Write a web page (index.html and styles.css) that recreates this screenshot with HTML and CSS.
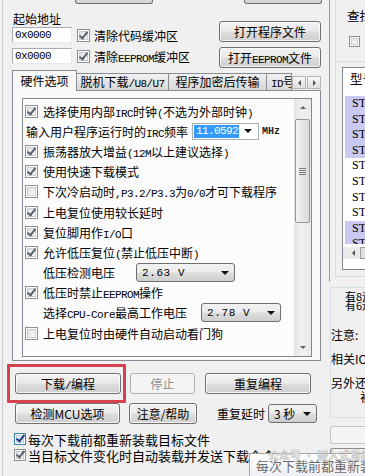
FILE: index.html
```html
<!DOCTYPE html>
<html lang="zh-CN">
<head>
<meta charset="utf-8">
<title>STC-ISP</title>
<link rel="stylesheet" href="styles.css">
</head>
<body>
<div class="screen">
  <div class="left">
    <div class="topstrip"><span class="stub s1"></span><span class="stub s2"></span></div>
    <div class="hdr">
      <div class="hdr-l">
        <div class="lbl">起始地址</div>
        <div class="addr-row"><span class="input a">0x0000</span><span class="cb on"></span><span class="cbt">清除代码缓冲区</span></div>
        <div class="addr-row r2"><span class="input a">0x0000</span><span class="cb on"></span><span class="cbt">清除<span class="a">EEPROM</span>缓冲区</span></div>
      </div>
      <div class="hdr-r">
        <div class="btn b-open">打开程序文件</div>
        <div class="btn b-open2">打开<span class="a">EEPROM</span>文件</div>
      </div>
    </div>
    <div class="tabs">
      <div class="tab sel t1">硬件选项</div>
      <div class="tab t2">脱机下载<span class="a">/U8/U7</span></div>
      <div class="tab t3">程序加密后传输</div>
      <div class="tab t4"><span class="a">ID</span>号</div>
      <div class="tabarrows"><span class="ta"><i class="tri-l"></i></span><span class="ta"><i class="tri-r"></i></span></div>
    </div>
    <div class="panel">
      <div class="opts">
        <div class="list">
          <div class="row"><span class="cb on"></span><span class="cbt">选择使用内部<span class="a">IRC</span>时钟<span class="a">(</span>不选为外部时钟<span class="a">)</span></span></div>
          <div class="row plain"><span>输入用户程序运行时的<span class="a">IRC</span>频率</span><span class="combo edit"><span class="sel-text a">11.0592</span><i class="tri"></i></span><span class="mhz">MHz</span></div>
          <div class="row"><span class="cb on"></span><span class="cbt">振荡器放大增益<span class="a">(12M</span>以上建议选择<span class="a">)</span></span></div>
          <div class="row"><span class="cb on"></span><span class="cbt">使用快速下载模式</span></div>
          <div class="row"><span class="cb"></span><span class="cbt">下次冷启动时<span class="a">,P3.2/P3.3</span>为<span class="a">0/0</span>才可下载程序</span></div>
          <div class="row"><span class="cb on"></span><span class="cbt">上电复位使用较长延时</span></div>
          <div class="row"><span class="cb on"></span><span class="cbt">复位脚用作<span class="a">I/O</span>口</span></div>
          <div class="row"><span class="cb on"></span><span class="cbt">允许低压复位<span class="a">(</span>禁止低压中断<span class="a">)</span></span></div>
          <div class="row indent"><span>低压检测电压</span><span class="combo drop c263"><span class="a">2.63 V</span><i class="tri"></i></span></div>
          <div class="row"><span class="cb on"></span><span class="cbt">低压时禁止<span class="a">EEPROM</span>操作</span></div>
          <div class="row indent"><span>选择<span class="a">CPU-Core</span>最高工作电压</span><span class="combo drop c278"><span class="a">2.78 V</span><i class="tri"></i></span></div>
          <div class="row"><span class="cb"></span><span class="cbt">上电复位时由硬件自动启动看门狗</span></div>
        </div>
        <div class="vscroll">
          <div class="arrow"><i class="tri-up"></i></div>
          <div class="track">
            <div class="thumb"><span class="grip"></span></div>
          </div>
          <div class="arrow"><i class="tri-dn"></i></div>
        </div>
      </div>
    </div>
    <div class="actions">
      <div class="act-row">
        <div class="btn b-dl">下载<span class="a">/</span>编程</div>
        <div class="btn dis b-stop">停止</div>
        <div class="btn b-rep">重复编程</div>
      </div>
      <div class="act-row r2">
        <div class="btn b-chk">检测MCU选项</div>
        <div class="btn b-help">注意/帮助</div>
        <span class="delay-lbl">重复延时</span>
        <span class="combo drop c3"><span>3 秒</span><i class="tri"></i></span>
      </div>
      <div class="bottom-cb first"><span class="cb on hot"></span><span>每次下载前都重新装载目标文件</span></div>
      <div class="bottom-cb"><span class="cb on"></span><span>当目标文件变化时自动装载并发送下载命令</span></div>
      <div class="redbox"></div>
    </div>
  </div>
  <div class="right">
    <div class="r-top">
      <div class="grp1">
        <div class="find">查找</div>
        <span class="cb small"></span>
      </div>
      <div class="grp2">
        <div class="models">
          <div class="mhead">型号</div>
          <div class="mrow hl">STC15W4K</div>
          <div class="mrow hl">STC15W4K</div>
          <div class="mrow hl">STC15W4K</div>
          <div class="mrow hl">STC15W4K</div>
          <div class="mrow">STC15F2K</div>
          <div class="mrow">STC15F2K</div>
          <div class="mrow">STC15F2K</div>
          <div class="mrow">STC15F2K</div>
          <div class="mrow hl">STC15W4K</div>
          <div class="mrow hl part">STC15W4K</div>
          <div class="hscroll"><span class="ha"><i class="tri-l"></i></span><span class="hthumb"></span></div>
        </div>
      </div>
    </div>
    <div class="r-bot">
      <div class="grp3">
        <div class="info i1">有8通道</div>
        <div class="info i2">有6通道</div>
        <div class="note n1">注意:</div>
        <div class="note n2">相关IO</div>
        <div class="note n3">另外还</div>
        <div class="note n4">初</div>
      </div>
      <div class="rbox"></div>
      <div class="rbtn">比方硬</div>
    </div>
  </div>
  <div class="tooltip">每次下载前都重新装载</div>
  <div class="watermark">公众号 · 嵌入式系统</div>
</div>
</body>
</html>
```

FILE: styles.css
```css
html, body {
  margin: 0;
  padding: 0;
}
body {
  width: 365px;
  height: 476px;
  overflow: hidden;
  background: #f0f0f0;
  font-family: "Noto Sans CJK SC", sans-serif;
  font-size: 12px;
  color: #000;
  text-autospace: no-autospace;
}
.screen {
  position: relative;
  display: flex;
  width: 365px;
  height: 476px;
  overflow: hidden;
}
.a {
  font-family: "Liberation Mono", monospace;
  font-size: 11px;
  letter-spacing: -0.6px;
}

/* ---------- left pane ---------- */
.left {
  margin-left: 2px;
  width: 326px;
  border-left: 1px solid #cdcdcd;
  flex: none;
  position: relative;
}
.topstrip {
  display: flex;
  height: 4px;
}
.stub {
  display: block;
  height: 3px;
  border: 1px solid #707070;
  border-top: none;
  border-radius: 0 0 3px 3px;
  background: #d6d6d6;
}
.s1 { margin-left: 72px; width: 76px; }
.s2 { margin-left: 91px; width: 76px; }

.hdr {
  display: flex;
  padding-left: 9px;
}
.hdr-l {
  width: 207px;
  padding-top: 8px;
}
.lbl {
  height: 14px;
  line-height: 14px;
  padding-left: 1px;
  margin-bottom: 1px;
}
.addr-row {
  display: flex;
  align-items: center;
  height: 16px;
  white-space: nowrap;
}
.addr-row.r2 {
  margin-top: 5px;
}
.input {
  box-sizing: border-box;
  width: 60px;
  height: 16px;
  line-height: 14px;
  padding-left: 2px;
  background: #fff;
  border: 1px solid #abadb3;
  border-right-color: #e3e9ef;
  border-bottom-color: #e3e9ef;
  margin-right: 5px;
}
.cbt {
  margin-left: 4px;
  white-space: nowrap;
}
.hdr-r {
  padding-top: 17px;
  display: flex;
  flex-direction: column;
  gap: 5px;
}

/* buttons */
.btn {
  box-sizing: border-box;
  height: 21px;
  line-height: 19px;
  text-align: center;
  border: 1px solid #707070;
  border-radius: 3px;
  background: linear-gradient(#f2f2f2 0%, #ebebeb 48%, #dddddd 52%, #cfcfcf 100%);
  box-shadow: inset 0 0 0 1px rgba(255,255,255,0.75);
  white-space: nowrap;
}
.btn.dis {
  border-color: #adb2b5;
  background: #f4f4f4;
  color: #8d8d8d;
  box-shadow: none;
}
.b-open, .b-open2 { width: 102px; }

/* checkbox */
.cb {
  position: relative;
  display: inline-block;
  flex: none;
  box-sizing: border-box;
  width: 13px;
  height: 13px;
  border: 1px solid #8e8f8f;
  background: #f4f4f4;
  box-shadow: inset 0 0 0 1px #fff, inset 0 0 0 2px #c9ccd0;
  background-image: linear-gradient(135deg, #d6d9dd 0%, #f6f6f6 70%, #ffffff 100%);
}
.cb.on::after {
  content: "";
  position: absolute;
  left: 3px;
  top: 0px;
  width: 3px;
  height: 7px;
  border: solid #56606b;
  border-width: 0 2px 2px 0;
  transform: rotate(38deg);
}
.cb.hot {
  border-color: #3c7fb1;
  background-image: linear-gradient(135deg, #c6e4f8 0%, #eef7fd 80%);
}
.cb.hot::after {
  border-color: #1c3d86;
}

/* tabs */
.tabs {
  position: relative;
  z-index: 2;
  display: flex;
  align-items: flex-end;
  height: 20px;
  margin-top: 2px;
  margin-left: 9px;
}
.tab {
  box-sizing: border-box;
  height: 17px;
  line-height: 15px;
  border: 1px solid #898c95;
  border-bottom: none;
  background: linear-gradient(#f2f2f2, #e3e3e3 50%, #d9d9d9);
  margin-left: -1px;
  text-align: center;
  white-space: nowrap;
  overflow: hidden;
}
.tab.sel {
  height: 21px;
  line-height: 19px;
  margin-left: 0;
  margin-bottom: -1px;
  background: #f9f9f9;
  width: 65px;
}
.t2 { width: 93px; }
.t3 { width: 99px; }
.t4 { width: 26px; text-align: left; padding-left: 4px; }
.tabarrows {
  display: flex;
  gap: 1px;
  margin-bottom: 1px;
}
.ta {
  box-sizing: border-box;
  display: flex;
  align-items: center;
  justify-content: center;
  width: 14px;
  height: 13px;
  border: 1px solid #b5b5b5;
  background: linear-gradient(#f6f6f6, #e0e0e0);
}
.tri-l {
  width: 0; height: 0;
  border-top: 3px solid transparent;
  border-bottom: 3px solid transparent;
  border-right: 3px solid #555;
}
.tri-r {
  width: 0; height: 0;
  border-top: 3px solid transparent;
  border-bottom: 3px solid transparent;
  border-left: 3px solid #555;
}

/* panel */
.panel {
  box-sizing: border-box;
  margin-left: 9px;
  width: 309px;
  height: 271px;
  border: 1px solid #898c95;
  background: #f9f9f9;
  padding: 7px 8px 0 9px;
}
.opts {
  box-sizing: border-box;
  display: flex;
  height: 259px;
  border: 1px solid #828790;
  background: #fcfcfc;
}
.list {
  flex: 1;
  padding: 2px 0 0 2px;
  overflow: hidden;
}
.row {
  display: flex;
  align-items: center;
  height: 20.2px;
  white-space: nowrap;
}
.row .cbt {
  margin-left: 5px;
}
.row.plain {
  padding-left: 1px;
}
.row.indent {
  padding-left: 18px;
}
.combo {
  position: relative;
  box-sizing: border-box;
  display: flex;
  align-items: center;
  justify-content: space-between;
  white-space: nowrap;
}
.combo.edit {
  margin-left: 4px;
  width: 67px;
  height: 17px;
  background: #fff;
  border: 1px solid #abadb3;
  padding: 1px 6px 1px 1px;
}
.sel-text {
  background: #3399ff;
  color: #fff;
  height: 13px;
  line-height: 13px;
  padding: 0 1px 0 2px;
}
.tri {
  flex: none;
  width: 0; height: 0;
  border-left: 4px solid transparent;
  border-right: 4px solid transparent;
  border-top: 4px solid #111;
}
.mhz {
  margin-left: 3px;
  font-family: "Liberation Mono", monospace;
  font-size: 10px;
  font-weight: bold;
  color: #222;
}
.combo.drop {
  height: 19px;
  border: 1px solid #707070;
  border-radius: 3px;
  background: linear-gradient(#f2f2f2 0%, #ebebeb 48%, #dddddd 52%, #cfcfcf 100%);
  padding: 0 5px 0 5px;
}
.c263 { margin-left: 21px; width: 99px; }
.c278 { margin-left: 14px; width: 80px; height: 21px; }
.c263 .a, .c278 .a { letter-spacing: 0.6px; }

/* vertical scrollbar */
.vscroll {
  width: 17px;
  display: flex;
  flex-direction: column;
  background: linear-gradient(90deg, #e3e3e3, #f0f0f0 40%, #eaeaea);
}
.arrow {
  height: 17px;
  display: flex;
  align-items: center;
  justify-content: center;
}
.tri-up {
  width: 0; height: 0;
  border-left: 3px solid transparent;
  border-right: 3px solid transparent;
  border-bottom: 3px solid #606060;
}
.tri-dn {
  width: 0; height: 0;
  border-left: 3px solid transparent;
  border-right: 3px solid transparent;
  border-top: 3px solid #606060;
}
.track {
  flex: 1;
  padding-top: 3px;
}
.thumb {
  box-sizing: border-box;
  margin: 0 1px;
  height: 104px;
  border: 1px solid #979797;
  border-radius: 2px;
  background: linear-gradient(90deg, #f4f4f4, #e6e6e6 50%, #d8d8d8);
  display: flex;
  align-items: center;
  justify-content: center;
}
.grip {
  width: 7px;
  height: 7px;
  background: repeating-linear-gradient(#7a7a7a 0 1px, transparent 1px 2px);
}

/* actions */
.actions {
  position: relative;
  padding-left: 12px;
  padding-top: 12px;
}
.act-row {
  display: flex;
  align-items: center;
  height: 21px;
}
.act-row.r2 {
  margin-top: 9px;
}
.b-dl { width: 106px; }
.b-stop { width: 65px; margin-left: 9px; }
.b-rep { width: 106px; margin-left: 10px; }
.b-chk { width: 105px; }
.b-help { width: 68px; margin-left: 9px; }
.delay-lbl { margin-left: 20px; }
.c3 { margin-left: 3px; width: 49px; height: 21px; font-size: 12px; }
.bottom-cb {
  display: flex;
  align-items: center;
  height: 16px;
  margin-left: -1px;
  font-size: 13px;
  white-space: nowrap;
}
.bottom-cb.first { margin-top: 7px; }
.bottom-cb .cb {
  width: 12px;
  height: 12px;
  margin-right: 2px;
}
.bottom-cb .cb.on::after {
  left: 3px;
  top: -1px;
}
.redbox {
  position: absolute;
  left: 4px;
  top: 3px;
  width: 113px;
  height: 33px;
  border: 3px solid #d6414f;
  border-radius: 1px;
}

/* ---------- right pane ---------- */
.right {
  flex: none;
  width: 36px;
  overflow: hidden;
  position: relative;
}
.r-top {
  height: 282px;
  border-left: 1px solid #9c9c9c;
  padding-left: 5px;
}
.grp1 {
  box-sizing: border-box;
  height: 62px;
  border-left: 1px solid #d5dfe5;
  border-bottom: 1px solid #d5dfe5;
  padding-left: 12px;
  padding-top: 8px;
  width: 120px;
}
.find {
  height: 16px;
  line-height: 16px;
  margin-left: -1px;
  font-size: 12.5px;
  white-space: nowrap;
}
.grp1 .cb {
  margin-top: 12px;
  margin-left: 1px;
  width: 11px;
  height: 11px;
}
.grp2 {
  box-sizing: border-box;
  height: 215px;
  border-left: 1px solid #d5dfe5;
  border-bottom: 1px solid #d5dfe5;
  padding: 5px 0 0 6px;
  width: 120px;
}
.models {
  box-sizing: border-box;
  height: 203px;
  border: 1px solid #828790;
  background: #fff;
  width: 120px;
  overflow: hidden;
}
.mhead {
  height: 28px;
  line-height: 22px;
  padding-left: 7px;
  font-size: 12.5px;
  white-space: nowrap;
}
.mrow {
  height: 15.6px;
  line-height: 15.6px;
  padding-left: 7px;
  font-family: "Liberation Serif", serif;
  font-size: 12px;
  margin-left: 2px;
  white-space: nowrap;
}
.mrow.hl { background: #c9c9f1; }
.mrow.part { height: 8px; overflow: hidden; }
.hscroll {
  display: flex;
  align-items: center;
  height: 12px;
  margin-top: 3px;
  background: #eaeaea;
}
.ha {
  display: flex;
  align-items: center;
  justify-content: center;
  width: 14px;
  margin-left: 3px;
}
.hthumb {
  width: 30px;
  height: 10px;
  border: 1px solid #a0a0a0;
  background: #e0e0e0;
}
.r-bot {
  padding-left: 1px;
  padding-top: 5px;
}
.grp3 {
  box-sizing: border-box;
  height: 131px;
  border: 1px solid #d5dfe5;
  border-right: none;
  padding-top: 4px;
  width: 120px;
}
.info {
  height: 9px;
  line-height: 9px;
  padding-left: 14px;
  font-size: 11px;
  white-space: nowrap;
}
.note {
  height: 14px;
  line-height: 14px;
  font-size: 12px;
  white-space: nowrap;
}
.note.n1 { margin-top: 18px; }
.note.n2 { margin-top: 10px; }
.note.n3 { margin-top: 10px; }
.note.n4 { margin-top: 0; padding-left: 29px; }
.rbox {
  box-sizing: border-box;
  margin-top: 8px;
  height: 18px;
  border: 1px solid #c5c5c5;
  border-right: none;
  border-radius: 3px 0 0 3px;
  background: #f4f4f4;
}
.rbtn {
  box-sizing: border-box;
  margin-top: 4px;
  height: 30px;
  padding: 2px 0 0 4px;
  border: 1px solid #8c8c8c;
  border-right: none;
  border-radius: 3px 0 0 3px;
  background: linear-gradient(#f2f2f2, #dcdcdc);
  white-space: nowrap;
  font-size: 13px;
}

/* overlays */
.tooltip {
  position: absolute;
  left: 249px;
  top: 453px;
  width: 130px;
  height: 26px;
  box-sizing: border-box;
  padding: 3px 0 0 6px;
  border: 1px solid #a6a6a6;
  background: linear-gradient(#ffffff, #eeeef3);
  color: #6b6b6b;
  font-size: 13px;
  white-space: nowrap;
  line-height: 18px;
}
.watermark {
  position: absolute;
  left: 268px;
  top: 447px;
  font-size: 11px;
  color: rgba(255,255,255,0.85);
  text-shadow: 0 0 1px #888, 0 0 1px #888;
  white-space: nowrap;
}
```
